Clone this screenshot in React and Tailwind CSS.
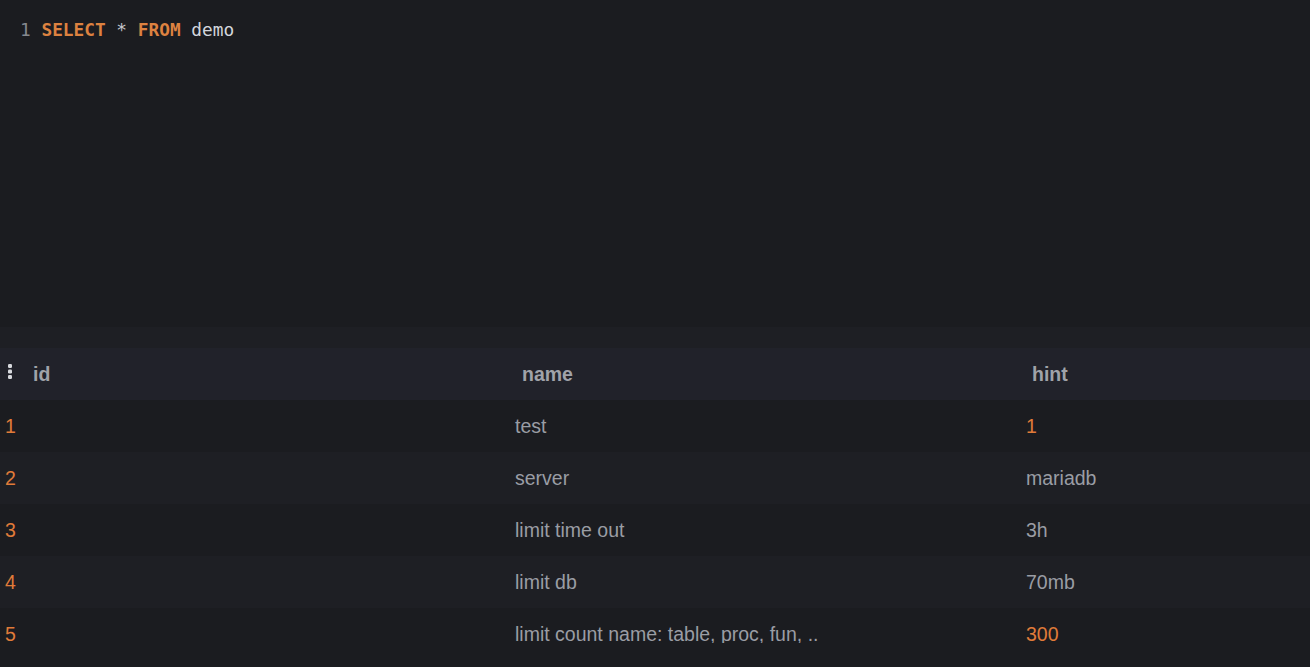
import React from "react";

const rows = [
  { id: "1", name: "test", hint: "1", hintNum: true },
  { id: "2", name: "server", hint: "mariadb" },
  { id: "3", name: "limit time out", hint: "3h" },
  { id: "4", name: "limit db", hint: "70mb" },
  { id: "5", name: "limit count name: table, proc, fun, ..", hint: "300", hintNum: true },
];

export default function App() {
  return (
    <div className="h-[667px] w-[1310px] bg-[#1b1c20] flex flex-col overflow-hidden">
      <div
        className="h-[327px] shrink-0 pl-[20px] pt-[18px] text-[17.8px] leading-[24px] whitespace-pre"
        style={{ fontFamily: '"DejaVu Sans Mono", "Liberation Mono", monospace' }}
      >
        <span className="text-[#85888f]">1 </span>
        <span className="text-[#dd8240] font-bold">SELECT</span>
        <span className="text-[#c4c7cd]"> * </span>
        <span className="text-[#dd8240] font-bold">FROM</span>
        <span className="text-[#d3d6dc]"> demo</span>
      </div>
      <div className="h-[21px] shrink-0 bg-[#1e1f24]" />
      <div
        className="flex flex-col flex-1 min-h-0"
        style={{ fontFamily: '"Liberation Sans", Arial, sans-serif' }}
      >
        <div className="h-[52px] shrink-0 pt-[2px] bg-[#21222a] grid grid-cols-[510px_510px_1fr] items-center text-[19.5px] font-bold text-[#a0a3a9]">
          <div className="flex items-center pl-[7px]">
            <svg width="6" height="18" viewBox="0 0 6 18" className="mr-[20px] -mt-[7px]">
              <rect x="1" y="1" width="4" height="4" rx="1.2" fill="#d8dade" />
              <rect x="1" y="6.5" width="4" height="4" rx="1.2" fill="#d8dade" />
              <rect x="1" y="12" width="4" height="4" rx="1.2" fill="#d8dade" />
            </svg>
            <span>id</span>
          </div>
          <div className="pl-[12px]">name</div>
          <div className="pl-[12px]">hint</div>
        </div>
        <div className="h-[243px] shrink-0 overflow-hidden">
          {rows.map((r, i) => (
            <div
              key={r.id}
              className={
                "h-[52px] pt-[2px] grid grid-cols-[510px_510px_1fr] items-center text-[19.5px] " +
                (i % 2 === 0 ? "bg-[#1b1c20]" : "bg-[#1e1f24]")
              }
            >
              <div className="pl-[5px] text-[#e07b39]">{r.id}</div>
              <div className="pl-[5px] text-[#9a9da4] whitespace-nowrap">{r.name}</div>
              <div className={"pl-[6px] " + (r.hintNum ? "text-[#e07b39]" : "text-[#9a9da4]")}>
                {r.hint}
              </div>
            </div>
          ))}
        </div>
        <div className="flex-1 bg-[#1b1c20]" />
      </div>
    </div>
  );
}
